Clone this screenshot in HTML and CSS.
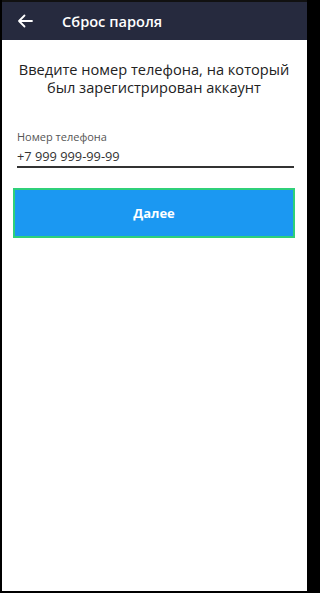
FILE: index.html
```html
<!DOCTYPE html>
<html lang="ru">
<head>
<meta charset="utf-8">
<link rel="stylesheet" href="styles.css">
</head>
<body>
<div class="app">
  <header class="topbar">
    <svg class="back" width="16" height="14" viewBox="0 0 16 14"><path d="M15 7H2M7.5 1.5L2 7l5.5 5.5" fill="none" stroke="#fff" stroke-width="1.8" stroke-linecap="round" stroke-linejoin="round"/></svg>
    <h1 class="title">Сброс пароля</h1>
  </header>
  <main class="content">
    <p class="lead">Введите номер телефона, на который<br>был зарегистрирован аккаунт</p>
    <div class="field">
      <label class="label">Номер телефона</label>
      <div class="input">+7 999 999-99-99</div>
    </div>
    <button class="btn">Далее</button>
  </main>
</div>
</body>
</html>
```
FILE: styles.css
```css
html, body { margin: 0; height: 100%; }
body {
  background: #000;
  font-family: "Open Sans", "Liberation Sans", sans-serif;
  width: 310px;
  overflow: hidden;
}
.app {
  box-sizing: border-box;
  width: 305px;
  height: 591px;
  margin: 0 3px 0 2px;
  background: #fff;
  display: flex;
  flex-direction: column;
}
.topbar {
  box-sizing: border-box;
  height: 40px;
  background: #262a3e;
  display: flex;
  align-items: center;
  padding-left: 15px;
  border-top: 2px solid #111;
}
.back { display: block; }
.title {
  margin: 0 0 0 29px;
  color: #fff;
  font-size: 14.6px;
  font-weight: 600;
}
.content { padding: 0 12px 0 11px; display: flex; flex-direction: column; }
.lead {
  margin: 20px 0 0;
  text-align: center;
  font-size: 14.6px;
  line-height: 18px;
  color: #222;
  white-space: nowrap;
}
.field { margin: 34px 1px 0 4px; display: flex; flex-direction: column; }
.label { font-size: 11px; color: #555; line-height: 14px; }
.input {
  margin-top: 4px;
  font-size: 12.8px;
  color: #333;
  line-height: 16px;
  padding-bottom: 2px;
  border-bottom: 2px solid #333;
}
.btn {
  margin-top: 20px;
  height: 50px;
  background: #1b98f2;
  border: 2px solid #2fd07a;
  color: #fff;
  font-family: inherit;
  font-size: 13px;
  font-weight: 700;
  cursor: pointer;
}
```
